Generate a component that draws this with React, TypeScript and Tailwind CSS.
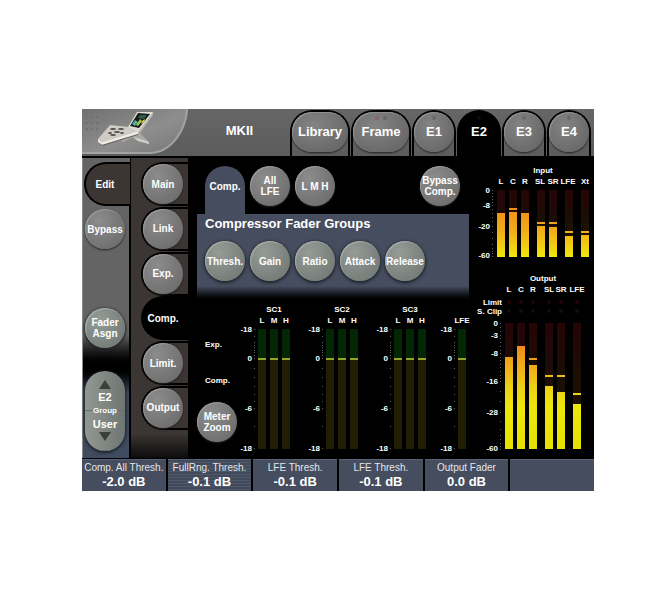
import clsx from 'clsx'

const tabs = [
  { name: 'Library', wide: true, dots: [] },
  { name: 'Frame', wide: true, dots: ['bg-[#8c6468]', 'bg-[#666666]'] },
  { name: 'E1', dots: ['bg-[#686868]'] },
  { name: 'E2', active: true, dots: ['bg-[#0c0c0c]'] },
  { name: 'E3', dots: ['bg-[#686868]'] },
  { name: 'E4', dots: ['bg-[#686868]'] },
]

const pages = ['Main', 'Link', 'Exp.', 'Comp.', 'Limit.', 'Output']

const groups = ['Thresh.', 'Gain', 'Ratio', 'Attack', 'Release']

const faders = [
  { label: 'Comp. All Thresh.', value: '-2.0 dB' },
  { label: 'FullRng. Thresh.', value: '-0.1 dB', lined: true },
  { label: 'LFE Thresh.', value: '-0.1 dB' },
  { label: 'LFE Thresh.', value: '-0.1 dB' },
  { label: 'Output Fader', value: '0.0 dB' },
  { label: '', value: '' },
]

type Bar = { name: string; x: number; labelX: number; top: number; peak?: number }
type Mark = { text: string; y: number }

const inputBars: Bar[] = [
  { name: 'L', x: 25, labelX: 29, top: 55 },
  { name: 'C', x: 37, labelX: 41, top: 54, peak: 50 },
  { name: 'R', x: 49, labelX: 53, top: 55 },
  { name: 'SL', x: 65, labelX: 68, top: 68, peak: 64 },
  { name: 'SR', x: 77, labelX: 81, top: 69, peak: 64 },
  { name: 'LFE', x: 93, labelX: 96, top: 78, peak: 73 },
  { name: 'Xt', x: 109, labelX: 113, top: 77, peak: 73 },
]

const outputBars: Bar[] = [
  { name: 'L', x: 33, labelX: 37, top: 91 },
  { name: 'C', x: 45, labelX: 49, top: 80 },
  { name: 'R', x: 57, labelX: 61, top: 99, peak: 92 },
  { name: 'SL', x: 73, labelX: 77, top: 120, peak: 109 },
  { name: 'SR', x: 85, labelX: 89, top: 126, peak: 109 },
  { name: 'LFE', x: 101, labelX: 105, top: 138, peak: 127 },
]

const inputMarks: Mark[] = [
  { text: '0', y: 32 },
  { text: '-8', y: 47 },
  { text: '-20', y: 68 },
  { text: '-60', y: 97 },
]

const outputMarks: Mark[] = [
  { text: '0', y: 57 },
  { text: '-3', y: 69 },
  { text: '-8', y: 87 },
  { text: '-16', y: 115 },
  { text: '-28', y: 146 },
  { text: '-60', y: 182 },
]

const scMarks: Mark[] = [
  { text: '-18', y: 26 },
  { text: '0', y: 55 },
  { text: '-6', y: 105 },
  { text: '-18', y: 145 },
]

const inputTicks = [32, 35, 38, 41, 44, 47, 51, 55, 59, 63, 68, 74, 80, 86, 90, 93, 95, 98]
const outputTicks = [
  57, 61, 65, 69, 72, 76, 80, 84, 87, 91, 94, 98, 101, 105, 109, 112, 115, 125, 135, 146, 155, 163, 169, 173, 177,
  180, 183,
]
const scTicks = [26, 33, 39, 42, 44, 47, 49, 52, 55, 65, 74, 83, 91, 98, 105, 123, 145]

function RoundButton({ text, green }: { text: string; green?: boolean }) {
  return (
    <button
      type="button"
      className={clsx(
        'flex size-[40px] shrink-0 items-center justify-center rounded-full text-center text-[10px] leading-[11px] font-bold whitespace-pre text-white',
        green
          ? 'bg-radial-[at_35%_30%] from-[#959b96] to-[#6c726d] shadow-[inset_1px_1px_1px_#a9adaa,0_1px_3px_1px_#1e242c]'
          : 'bg-radial-[at_35%_30%] from-[#8c8c8c] to-[#666666] shadow-[inset_1px_1px_1px_#9a9a9a,0_1px_2px_#222222]',
      )}
    >
      {text}
    </button>
  )
}

function Marks({ marks, ticks, x }: { marks: Mark[]; ticks: number[]; x: number }) {
  return (
    <>
      {marks.map((mark, i) => (
        <text key={i} x={x} y={mark.y + 3} textAnchor="end">
          {mark.text}
        </text>
      ))}
      {ticks.map((y) => (
        <rect key={y} x={x + 2} y={y} width="1" height="1" fill="#5c5c5c" />
      ))}
    </>
  )
}

function Bars({ bars, top, bottom, fill }: { bars: Bar[]; top: number; bottom: number; fill: string }) {
  return (
    <>
      {bars.map((bar) => (
        <g key={bar.name}>
          <rect x={bar.x} y={top} width="8" height={bottom - top} fill="url(#unlit)" />
          <rect x={bar.x} y={bar.top} width="8" height={bottom - bar.top} fill={fill} />
          {bar.peak && <rect x={bar.x} y={bar.peak} width="8" height="2" fill={fill} />}
        </g>
      ))}
    </>
  )
}

function LevelMeters() {
  return (
    <div className="w-[122px] shrink-0">
      <svg viewBox="0 0 122 108" className="block w-full fill-white text-[8px] font-bold" role="img" aria-label="Input">
        <defs>
          <linearGradient id="unlit" x1="0" y1="0" x2="0" y2="1">
            <stop offset="0" stopColor="#260505" />
            <stop offset="0.35" stopColor="#1c0c05" />
            <stop offset="1" stopColor="#1a1a02" />
          </linearGradient>
          <linearGradient id="inputLit" gradientUnits="userSpaceOnUse" x1="0" y1="48" x2="0" y2="99">
            <stop offset="0" stopColor="#f28a1c" />
            <stop offset="0.5" stopColor="#f0ae18" />
            <stop offset="1" stopColor="#f2e80c" />
          </linearGradient>
        </defs>
        <text x="71" y="15" textAnchor="middle">
          Input
        </text>
        {inputBars.map((bar) => (
          <text key={bar.name} x={bar.labelX} y="26" textAnchor="middle">
            {bar.name}
          </text>
        ))}
        <Marks marks={inputMarks} ticks={inputTicks} x={18} />
        <Bars bars={inputBars} top={32} bottom={99} fill="url(#inputLit)" />
      </svg>
      <svg
        viewBox="0 0 122 192"
        className="block w-full fill-white text-[8px] font-bold"
        role="img"
        aria-label="Output"
      >
        <defs>
          <linearGradient id="outputLit" gradientUnits="userSpaceOnUse" x1="0" y1="80" x2="0" y2="183">
            <stop offset="0" stopColor="#f28a1c" />
            <stop offset="0.4" stopColor="#ecd014" />
            <stop offset="0.6" stopColor="#ece80a" />
            <stop offset="1" stopColor="#e6e000" />
          </linearGradient>
        </defs>
        <text x="71" y="15" textAnchor="middle">
          Output
        </text>
        {outputBars.map((bar) => (
          <g key={bar.name}>
            <text x={bar.labelX} y="26" textAnchor="middle">
              {bar.name}
            </text>
            <circle cx={bar.x + 4} cy="36" r="2" fill="#210507" />
            <circle cx={bar.x + 4} cy="45" r="2" fill="#0e0e0e" />
          </g>
        ))}
        <text x="30" y="39" textAnchor="end">
          Limit
        </text>
        <text x="30" y="48" textAnchor="end">
          S. Clip
        </text>
        <Marks marks={outputMarks} ticks={outputTicks} x={26} />
        <Bars bars={outputBars} top={57} bottom={183} fill="url(#outputLit)" />
      </svg>
    </div>
  )
}

function ScMeter({ title, bands }: { title?: string; bands: string[] }) {
  const width = 16 + bands.length * 12

  return (
    <svg
      width={width}
      height="152"
      viewBox={`0 0 ${width} 152`}
      className="shrink-0 overflow-visible fill-white text-[8px] font-bold"
      role="img"
      aria-label={title ?? bands[0]}
    >
      {title && (
        <text x="32" y="9" textAnchor="middle">
          {title}
        </text>
      )}
      <Marks marks={scMarks} ticks={scTicks} x={10} />
      {bands.map((band, i) => (
        <g key={band}>
          <text x={20 + i * 12} y="20" textAnchor="middle">
            {band}
          </text>
          <rect x={16 + i * 12} y="26" width="8" height="29" fill="#032604" />
          <rect x={16 + i * 12} y="55" width="8" height="2" fill="#98a32a" />
          <rect x={16 + i * 12} y="57" width="8" height="89" fill="#221e03" />
        </g>
      ))}
    </svg>
  )
}

function Logo() {
  return (
    <svg width="107" height="47" viewBox="0 0 107 47" className="shrink-0" role="img" aria-label="Console">
      <defs>
        <linearGradient id="plate" x1="0" y1="0" x2="1" y2="1">
          <stop offset="0" stopColor="#707070" />
          <stop offset="0.55" stopColor="#8e8e8e" />
          <stop offset="1" stopColor="#767676" />
        </linearGradient>
      </defs>
      <path d="M0 0H106C105 19 92 44 68 44H0Z" fill="url(#plate)" />
      <path d="M105 0C104 19 91 44 67 44H0" fill="none" stroke="#a2a2a2" strokeWidth="2" />
      {[5, 10, 15].map((x) =>
        [8, 14, 20].map((y) => <circle key={`${x}-${y}`} cx={x} cy={y} r="1" fill="#6c6c6c" />),
      )}
      <path d="M52 22L57 23L67 33L67 35L56 32L51 28L41 33L39 32L50 25Z" fill="#a9a9a6" />
      <path d="M51 28L56 32L67 35L67 33L55 29Z" fill="#d0d0cc" />
      <path d="M16 30L28 16L47 18L56 22L20 33Z" fill="#cfccc5" />
      <path d="M16 30L20 33L56 22L56 25L20 36L16 33Z" fill="#eceae3" />
      <path d="M16 33L20 36L56 25L56 26L20 37Z" fill="#66645f" />
      <path d="M46 18L55 3L71 3L71 5L57 23Z" fill="#dddcd5" />
      <path d="M48 17L56 4L68 5L57 19Z" fill="#171c1b" />
      <path d="M71 3V6L58 24L56 23Z" fill="#b9b7b0" />
      <path d="M50 15L53 11L56 13L53 17Z" fill="#48b0a0" />
      <path d="M54 16L58 10L60 12L56 17Z" fill="#a9c13e" />
      <path d="M58 6L65 6L62 10L56 9Z" fill="#35594f" />
      <path d="M60 12L63 10L62 13L59 15Z" fill="#d6cf3e" />
      <g fill="#55514f">
        <ellipse cx="31" cy="20" rx="3" ry="1" />
        <ellipse cx="39" cy="20" rx="3" ry="1" />
        <ellipse cx="35" cy="23" rx="3" ry="1" />
        <ellipse cx="28" cy="24" rx="2" ry="1" />
        <ellipse cx="40" cy="24" rx="2" ry="1" />
        <ellipse cx="31" cy="26" rx="3" ry="1" />
      </g>
    </svg>
  )
}

export default function App() {
  return (
    <div className="min-h-screen bg-white pt-[109px] pr-[78px] pl-[82px] font-['Liberation_Sans',Arial,sans-serif] text-white">
      <div className="bg-black">
        <header className="flex border-b-2 border-black bg-linear-to-b from-[#666666] to-[#5c5c5c]">
          <Logo />
          <h1 className="flex-1 pt-[14px] text-center text-[13px] leading-[16px] font-bold">MKII</h1>
          <nav className="flex gap-px pt-px pr-[3px]">
            {tabs.map((tab) => (
              <div
                key={tab.name}
                className={clsx(
                  'h-[46px] rounded-t-[22px] border-2 border-b-0 border-black',
                  tab.wide ? 'w-[60px]' : 'w-[44px]',
                  tab.active && 'bg-black',
                )}
              >
                <button
                  type="button"
                  className={clsx(
                    'relative h-[40px] w-full rounded-[20px] text-[13px] leading-[16px] font-bold',
                    !tab.active &&
                      'bg-radial-[at_40%_35%] from-[#848484] to-[#606060] shadow-[inset_1px_1px_1px_#929292,0_1px_2px_#222222]',
                  )}
                >
                  <span className="absolute inset-x-0 top-[4px] flex justify-center gap-[4px]">
                    {tab.dots.map((dot, i) => (
                      <span key={i} className={clsx('size-[4px] rounded-full', dot)} />
                    ))}
                  </span>
                  {tab.name}
                </button>
              </div>
            ))}
          </nav>
        </header>

        <div className="flex">
          <div className="flex w-[48px] shrink-0 flex-col border-l border-[#888888] bg-[#646464]">
            <div className="pt-[4px] pl-px">
              <button
                type="button"
                className="h-[44px] w-full rounded-l-full border-2 border-r-0 border-black bg-[#3b3533] pr-[6px] text-[10px] font-bold"
              >
                Edit
              </button>
            </div>
            <div className="flex flex-1 flex-col justify-between border-r border-black bg-linear-to-b from-[#646464] from-80% to-black px-[2px] pt-[3px] pb-[18px]">
              <RoundButton text="Bypass" />
              <RoundButton text={'Fader\nAsgn'} green />
            </div>
            <div className="border-r border-black bg-linear-to-b from-black to-[#3f4b5e] to-30% px-[2px] pt-[5px] pb-[7px]">
              <div className="relative flex h-[80px] w-[40px] flex-col divide-y divide-[#69716b] overflow-hidden rounded-full bg-linear-to-r from-[#929994] to-[#6f7570] shadow-[0_1px_3px_1px_#1c222b]">
                <button type="button" className="flex flex-1 flex-col items-center pt-[9px] font-bold">
                  <svg width="12" height="9" viewBox="0 0 12 9" className="shrink-0 fill-[#3b3f3c]">
                    <path d="M6 0L12 9H0Z" />
                  </svg>
                  <span className="text-[11px] leading-[16px]">E2</span>
                </button>
                <button type="button" className="flex flex-1 flex-col items-center justify-end pb-[9px] font-bold">
                  <span className="text-[11px] leading-[16px]">User</span>
                  <svg width="12" height="9" viewBox="0 0 12 9" className="shrink-0 fill-[#3b3f3c]">
                    <path d="M0 0H12L6 9Z" />
                  </svg>
                </button>
                <span className="pointer-events-none absolute inset-0 flex items-center justify-center text-[8px] leading-[8px] font-bold">
                  Group
                </span>
              </div>
            </div>
          </div>

          <nav className="flex w-[58px] shrink-0 flex-col justify-between border-l border-black bg-linear-to-b from-[#3b3533] from-92% to-[#0d0c0c] pt-[4px] pb-[28px] pl-[10px]">
            {pages.map((page) => (
              <div
                key={page}
                className={clsx(
                  'rounded-l-full border-2 border-r-0 border-black',
                  page === 'Comp.' && 'bg-black',
                )}
              >
                {page === 'Comp.' ? (
                  <button type="button" className="size-[40px] text-[10px] font-bold">
                    {page}
                  </button>
                ) : (
                  <RoundButton text={page} />
                )}
              </div>
            ))}
          </nav>

          <main className="min-w-0 flex-1 pt-[8px] pl-[9px]">
            <div className="flex gap-[5px] pr-[12px] pl-[8px]">
              <button
                type="button"
                className="h-[48px] w-[40px] rounded-t-full bg-[#454d5e] pb-[8px] text-[10px] font-bold"
              >
                Comp.
              </button>
              <RoundButton text={'All\nLFE'} />
              <RoundButton text="L M H" />
              <div className="ml-auto">
                <RoundButton text={'Bypass\nComp.'} />
              </div>
            </div>

            <section className="mr-[3px] h-[88px] bg-linear-to-b from-[#454d5e] from-82% to-black px-[8px] pt-px">
              <h2 className="text-[13px] leading-[18px] font-bold">Compressor Fader Groups</h2>
              <div className="flex gap-[5px] pt-[8px]">
                {groups.map((group) => (
                  <RoundButton key={group} text={group} green />
                ))}
              </div>
            </section>

            <div className="flex justify-between pt-px pr-[2px]">
              <div className="w-[45px] shrink-0 text-[8px] leading-[10px] font-bold">
                <div className="flex flex-col gap-[26px] pt-[37px] pb-[16px] pl-[8px]">
                  <span>Exp.</span>
                  <span>Comp.</span>
                </div>
                <RoundButton text={'Meter\nZoom'} />
              </div>
              <div className="flex gap-[12px]">
                <div className="flex gap-[16px]">
                  <ScMeter title="SC1" bands={['L', 'M', 'H']} />
                  <ScMeter title="SC2" bands={['L', 'M', 'H']} />
                  <ScMeter title="SC3" bands={['L', 'M', 'H']} />
                </div>
                <ScMeter bands={['LFE']} />
              </div>
            </div>
          </main>

          <LevelMeters />
        </div>

        <footer className="grid grid-cols-6 gap-x-[2px] border-t border-black">
          {faders.map((fader, i) => (
            <div
              key={i}
              className={clsx(
                'h-[32px] border-t border-[#5a6375] text-center whitespace-nowrap',
                fader.lined
                  ? 'bg-[repeating-linear-gradient(#414a5b_0_2px,#4f596b_2px_3px)]'
                  : 'bg-[#454d5e]',
              )}
            >
              <div className="text-[10px] leading-[15px] text-[#e4e6ea]">{fader.label}</div>
              <div className="text-[13px] leading-[14px] font-bold">{fader.value}</div>
            </div>
          ))}
        </footer>
      </div>
    </div>
  )
}
